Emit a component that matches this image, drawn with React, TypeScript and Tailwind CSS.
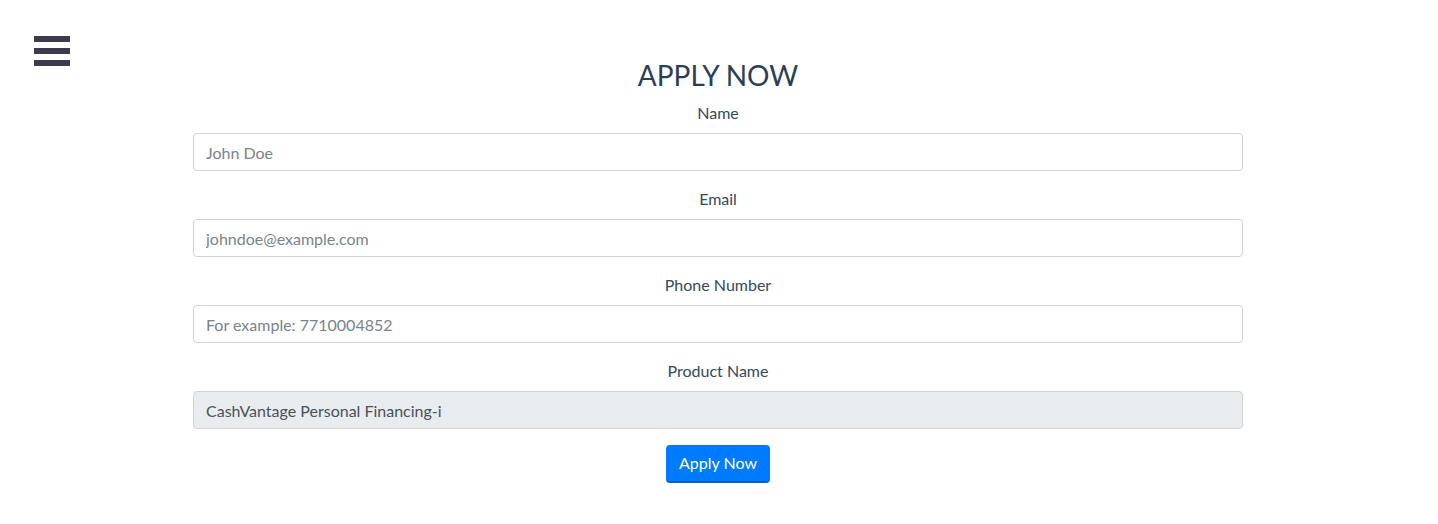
export default function App() {
  const fields = [
    { label: "Name", placeholder: "John Doe", type: "text" },
    { label: "Email", placeholder: "johndoe@example.com", type: "email" },
    { label: "Phone Number", placeholder: "For example: 7710004852", type: "tel" },
  ];

  return (
    <div className="min-h-screen w-full bg-white font-['Lato',sans-serif] text-[#2c3e50]">
      <div className="pt-[36px] pl-[34px]">
        <button className="flex flex-col gap-[6px]">
          <span className="block h-[6px] w-[36px] bg-[#3b3b4d]" />
          <span className="block h-[6px] w-[36px] bg-[#3b3b4d]" />
          <span className="block h-[6px] w-[36px] bg-[#3b3b4d]" />
        </button>
      </div>

      <form className="ml-[193px] w-[1050px] -mt-[9px]" onSubmit={(e) => e.preventDefault()}>
        <h1 className="text-center text-[28px] leading-[36px] text-[#2c3e55] mb-[8px]">APPLY NOW</h1>

        {fields.map((f) => (
          <div key={f.label} className="mb-4">
            <label className="block text-center text-[16px] leading-[24px] mb-2 text-[#34495e]">{f.label}</label>
            <input
              type={f.type}
              placeholder={f.placeholder}
              className="block w-full h-[38px] px-[12px] rounded-[4px] border border-[#ced4da] text-[16px] text-[#495057] placeholder:text-[#7b838a] outline-none"
            />
          </div>
        ))}

        <div className="mb-4">
          <label className="block text-center text-[16px] leading-[24px] mb-2 text-[#34495e]">Product Name</label>
          <input
            type="text"
            readOnly
            value="CashVantage Personal Financing-i"
            className="block w-full h-[38px] px-[12px] rounded-[4px] border border-[#ced4da] bg-[#e9ecef] text-[16px] text-[#495057] outline-none"
          />
        </div>

        <div className="flex justify-center">
          <button
            type="submit"
            className="h-[38px] w-[104px] rounded-[4px] bg-[#007bff] text-white text-[16px] border-b-2 border-[#0062cc]"
          >
            Apply Now
          </button>
        </div>
      </form>
    </div>
  );
}
